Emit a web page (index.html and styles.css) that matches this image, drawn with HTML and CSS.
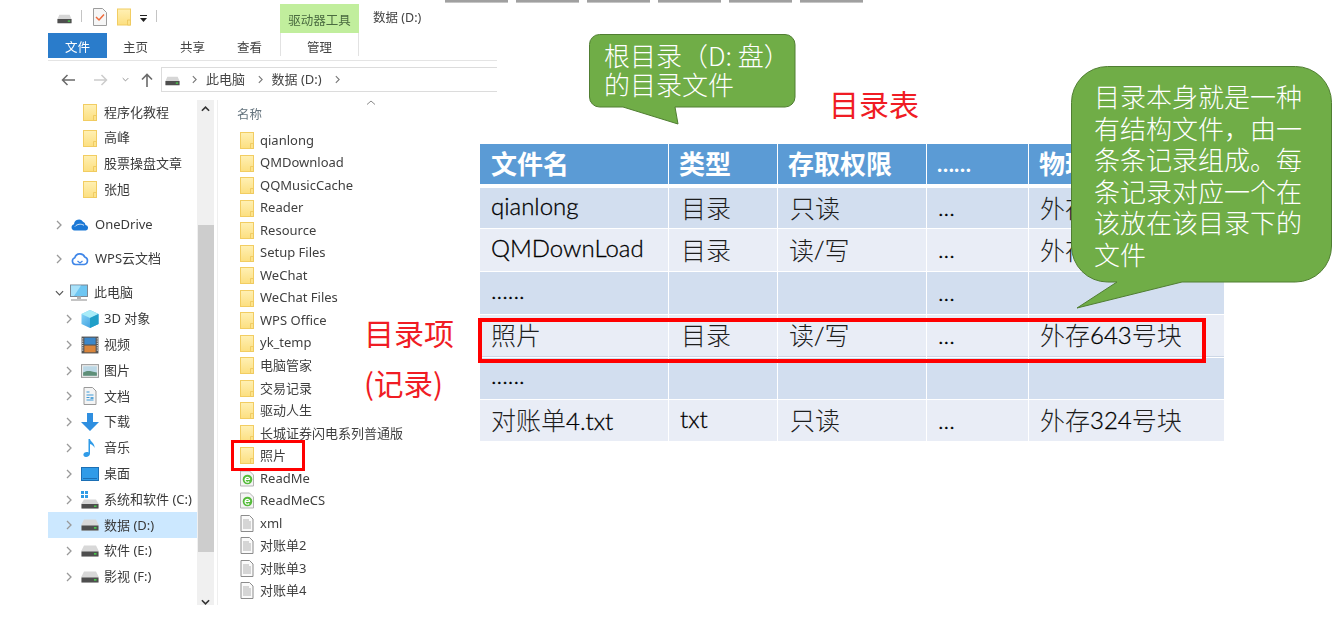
FILE: index.html
```html
<!DOCTYPE html>
<html lang="zh-CN">
<head>
<meta charset="utf-8">
<title>目录表</title>
<link rel="stylesheet" href="styles.css">
</head>
<body>
<svg class="defs" width="0" height="0" aria-hidden="true">
  <defs>
    <linearGradient id="fg" x1="0" y1="0" x2="0" y2="1"><stop offset="0" stop-color="#fff0b4"/><stop offset="1" stop-color="#fcdf80"/></linearGradient>
    <linearGradient id="sc" x1="0" y1="0" x2="1" y2="1"><stop offset="0" stop-color="#8fdcfb"/><stop offset="1" stop-color="#2a8fd8"/></linearGradient>
    <symbol id="folder" viewBox="0 0 14 17"><rect x=".5" y=".5" width="13" height="16" fill="url(#fg)" stroke="#f2cd62"/><path d="M10.500 16.500V11.500h3V16.500z" fill="#fde38a" stroke="#ecc65a" stroke-width=".8"/></symbol>
    <symbol id="drive" viewBox="0 0 16 10"><path d="M2.500.5h11L15.500 5v4.500H.5V5z" fill="#d6d6d6"/><rect x=".5" y="5" width="15" height="4.500" fill="#4e4e4e"/><rect x="11.500" y="6.500" width="2.500" height="1.500" fill="#47c84a"/></symbol>
    <symbol id="cdrive" viewBox="0 0 18 18"><g fill="#2e9be6"><rect x="0" y="0" width="3" height="3"/><rect x="4" y="0" width="3" height="3"/><rect x="0" y="4" width="3" height="3"/><rect x="4" y="4" width="3" height="3"/></g><path d="M3 8.500h12l2.500 4v5H.5v-5z" fill="#d6d6d6"/><rect x=".5" y="13" width="17" height="4.500" fill="#4e4e4e"/><rect x="13" y="14.500" width="2.500" height="1.500" fill="#47c84a"/></symbol>
    <symbol id="ddrive" viewBox="0 0 18 12"><path d="M3 .5h12l2.500 5v6H.5v-6z" fill="#d8d8d8"/><rect x=".5" y="6.500" width="17" height="5" fill="#4e4e4e"/><rect x="13" y="8" width="2.500" height="1.700" fill="#47c84a"/></symbol>
    <symbol id="onedrive" viewBox="0 0 18 12"><path d="M3.500 11.500a3.200 3.200 0 0 1-.5-6.300 5 5 0 0 1 9-2.500 3.800 3.800 0 0 1 2.500 3.300 2.800 2.800 0 0 1 .5 5.500z" fill="#1b78d6"/><path d="M4 7.500c2-2.500 6-3 9-1.200" fill="none" stroke="#fff" stroke-width=".8"/></symbol>
    <symbol id="wps" viewBox="0 0 18 14"><path d="M4.500 12.500a3.500 3.500 0 0 1-.7-6.800 5.300 5.300 0 0 1 10-.6 3.800 3.800 0 0 1-.6 7.400z" fill="#fff" stroke="#3f86e8" stroke-width="1.600"/><path d="M6.500 9l2.500 2 2.500-2" fill="none" stroke="#3f86e8" stroke-width="1.300"/></symbol>
    <symbol id="pc" viewBox="0 0 18 17"><rect x=".5" y=".5" width="17" height="11.500" fill="#6ec6f2" stroke="#7c8894"/><path d="M1 1h10L4 11.500H1z" fill="#a9e2fa"/><rect x="7" y="12" width="4" height="2.500" fill="#b4b4b4"/><rect x="1" y="14.500" width="16" height="2" fill="#c4c4c4"/></symbol>
    <symbol id="cube" viewBox="0 0 18 18"><path d="M9 0l8.500 4v10L9 18 .5 14V4z" fill="url(#sc)"/><path d="M9 0l8.500 4L9 8 .5 4z" fill="#a8ecf8"/><path d="M9 8v10l8.500-4V4z" fill="#1f9fc8"/></symbol>
    <symbol id="film" viewBox="0 0 16 16"><rect x=".5" y=".5" width="15" height="15" fill="#555"/><rect x="3" y="1.500" width="10" height="6" fill="#3b87c9"/><rect x="3" y="8.500" width="10" height="6" fill="#d9853c"/><path d="M1.500 2v12M14.500 2v12" stroke="#ddd" stroke-dasharray="1 1"/></symbol>
    <symbol id="pic" viewBox="0 0 17 13"><rect x=".5" y=".5" width="16" height="12" fill="#f2f2f2" stroke="#9a9a9a"/><rect x="2" y="2" width="13" height="9" fill="#bcd8e6"/><path d="M2 8c3-2 6-2 13 0v3H2z" fill="#5f8f78"/></symbol>
    <symbol id="docblue" viewBox="0 0 13 18"><path d="M.5.5h8.500l3.500 3.500v13.500H.5z" fill="#f4f4f4" stroke="#9a9a9a"/><path d="M3 5h3M3 8h7M3 10.500h3M3 13h7" stroke="#3f9ad8" stroke-width="1.100"/><rect x="7" y="10" width="3" height="2" fill="#5aa6d8"/></symbol>
    <symbol id="down" viewBox="0 0 18 18"><path d="M6 0h6v9h6l-9 9-9-9h6z" fill="#2f8fe0"/></symbol>
    <symbol id="note" viewBox="0 0 14 18"><path d="M5.500 0h1.500c.5 3 5 4 4.500 9-.7-2-2.500-3.500-4.500-4v9.500c0 2-2 3.500-4 3.500S0 16.500.5 15s3-2.500 5-1.500z" fill="#2f9be8"/></symbol>
    <symbol id="desk" viewBox="0 0 18 14"><rect x=".5" y=".5" width="17" height="13" fill="#2f9be8" stroke="#1c6fb4"/><rect x="2" y="11" width="14" height="1" fill="#1c6fb4"/></symbol>
    <symbol id="check" viewBox="0 0 14 18"><path d="M.5.500h9l4 4v13H.5z" fill="#f6f6f6" stroke="#9c9c9c"/><path d="M3 9l3 3 5-5.500" fill="none" stroke="#ee6a3c" stroke-width="1.500"/></symbol>
    <symbol id="ie" viewBox="0 0 14 16"><path d="M.5.500h9l4 4v11H.5z" fill="#f4f4f4" stroke="#b4b4b4"/><circle cx="7.500" cy="9" r="4.800" fill="#55bb3a"/><path d="M5 9h5M9.800 8.800a2.400 2.400 0 1 0-.6 2.200" fill="none" stroke="#fff" stroke-width="1.200"/></symbol>
    <symbol id="txt" viewBox="0 0 13 17"><path d="M.5.500h8.500l3.500 3.500v12.500H.5z" fill="#fafafa" stroke="#8c8c8c"/><path d="M2.500 5h6M2.500 7h8M2.500 9h8M2.500 11h8M2.500 13h8" stroke="#a8a8a8" stroke-width=".9"/></symbol>
    <symbol id="chev" viewBox="0 0 6 10"><path d="M1 1l4 4-4 4" fill="none" stroke="currentColor" stroke-width="1.300"/></symbol>
    <symbol id="chevd" viewBox="0 0 10 6"><path d="M1 1l4 4 4-4" fill="none" stroke="currentColor" stroke-width="1.300"/></symbol>
  </defs>
</svg>

<div class="slide">
  <div class="topstrips"><i></i><i></i><i></i><i></i><i></i><i></i></div>

  <section class="explorer">
    <header class="titlebar">
      <svg class="ti-drive"><use href="#drive"/></svg>
      <span class="ti-sep"></span>
      <svg class="ti-check"><use href="#check"/></svg>
      <svg class="ti-folder"><use href="#folder"/></svg>
      <svg class="ti-drop" viewBox="0 0 7 8"><path d="M0 0h7v1H0zM0 3h7L3.500 7z" fill="#222"/></svg>
      <span class="ti-sep ti-sep2"></span>
      <span class="ctx-tab">驱动器工具</span>
      <span class="win-title">数据 (D:)</span>
    </header>
    <nav class="tabs">
      <span class="tab file">文件</span>
      <span class="tab">主页</span>
      <span class="tab">共享</span>
      <span class="tab">查看</span>
      <span class="tab manage">管理</span>
    </nav>
    <div class="addr-row">
      <svg class="nav back" viewBox="0 0 14 12"><path d="M14 6H1.500M6.500 1l-5 5 5 5" fill="none" stroke="currentColor" stroke-width="1.500"/></svg>
      <svg class="nav fwd" viewBox="0 0 14 12"><path d="M0 6h12.500M7.500 1l5 5-5 5" fill="none" stroke="currentColor" stroke-width="1.500"/></svg>
      <svg class="nav drop"><use href="#chevd"/></svg>
      <svg class="nav up" viewBox="0 0 12 14"><path d="M6 14V1.500M1 6.500l5-5 5 5" fill="none" stroke="currentColor" stroke-width="1.600"/></svg>
      <div class="addr">
        <svg class="addr-drive"><use href="#drive"/></svg>
        <svg class="addr-chev"><use href="#chev"/></svg>
        <span>此电脑</span>
        <svg class="addr-chev"><use href="#chev"/></svg>
        <span>数据 (D:)</span>
        <svg class="addr-chev"><use href="#chev"/></svg>
      </div>
    </div>

    <div class="main">
      <aside class="tree">
        <div class="node l3"><svg class="fd"><use href="#folder"/></svg>程序化教程</div>
        <div class="node l3"><svg class="fd"><use href="#folder"/></svg>高峰</div>
        <div class="node l3"><svg class="fd"><use href="#folder"/></svg>股票操盘文章</div>
        <div class="node l3"><svg class="fd"><use href="#folder"/></svg>张旭</div>
        <div class="node l1 gap9"><svg class="ch"><use href="#chev"/></svg><svg class="ic"><use href="#onedrive"/></svg>OneDrive</div>
        <div class="node l1 gap8"><svg class="ch"><use href="#chev"/></svg><svg class="ic"><use href="#wps"/></svg>WPS云文档</div>
        <div class="node l1 gap8"><svg class="ch open"><use href="#chevd"/></svg><svg class="ic"><use href="#pc"/></svg>此电脑</div>
        <div class="node l2"><svg class="ch"><use href="#chev"/></svg><svg class="ic"><use href="#cube"/></svg>3D 对象</div>
        <div class="node l2"><svg class="ch"><use href="#chev"/></svg><svg class="ic"><use href="#film"/></svg>视频</div>
        <div class="node l2"><svg class="ch"><use href="#chev"/></svg><svg class="ic"><use href="#pic"/></svg>图片</div>
        <div class="node l2"><svg class="ch"><use href="#chev"/></svg><svg class="ic"><use href="#docblue"/></svg>文档</div>
        <div class="node l2"><svg class="ch"><use href="#chev"/></svg><svg class="ic"><use href="#down"/></svg>下载</div>
        <div class="node l2"><svg class="ch"><use href="#chev"/></svg><svg class="ic"><use href="#note"/></svg>音乐</div>
        <div class="node l2"><svg class="ch"><use href="#chev"/></svg><svg class="ic"><use href="#desk"/></svg>桌面</div>
        <div class="node l2"><svg class="ch"><use href="#chev"/></svg><svg class="ic"><use href="#cdrive"/></svg>系统和软件 (C:)</div>
        <div class="node l2 sel"><svg class="ch"><use href="#chev"/></svg><svg class="ic"><use href="#ddrive"/></svg>数据 (D:)</div>
        <div class="node l2"><svg class="ch"><use href="#chev"/></svg><svg class="ic"><use href="#ddrive"/></svg>软件 (E:)</div>
        <div class="node l2"><svg class="ch"><use href="#chev"/></svg><svg class="ic"><use href="#ddrive"/></svg>影视 (F:)</div>
      </aside>
      <div class="vbar">
        <svg class="vb-arrow" viewBox="0 0 10 6"><path d="M1 5l4-4 4 4" fill="none" stroke="#333" stroke-width="1.800"/></svg>
        <div class="vb-thumb"></div>
        <svg class="vb-arrow" viewBox="0 0 10 6"><path d="M1 1l4 4 4-4" fill="none" stroke="#333" stroke-width="1.800"/></svg>
      </div>
      <div class="files">
        <div class="files-head"><span>名称</span><svg class="sort" viewBox="0 0 10 5"><path d="M1 4.500L5 1l4 3.500" fill="none" stroke="#8a8a8a"/></svg></div>
        <div class="f"><svg class="fi"><use href="#folder"/></svg>qianlong</div>
        <div class="f"><svg class="fi"><use href="#folder"/></svg>QMDownload</div>
        <div class="f"><svg class="fi"><use href="#folder"/></svg>QQMusicCache</div>
        <div class="f"><svg class="fi"><use href="#folder"/></svg>Reader</div>
        <div class="f"><svg class="fi"><use href="#folder"/></svg>Resource</div>
        <div class="f"><svg class="fi"><use href="#folder"/></svg>Setup Files</div>
        <div class="f"><svg class="fi"><use href="#folder"/></svg>WeChat</div>
        <div class="f"><svg class="fi"><use href="#folder"/></svg>WeChat Files</div>
        <div class="f"><svg class="fi"><use href="#folder"/></svg>WPS Office</div>
        <div class="f"><svg class="fi"><use href="#folder"/></svg>yk_temp</div>
        <div class="f"><svg class="fi"><use href="#folder"/></svg>电脑管家</div>
        <div class="f"><svg class="fi"><use href="#folder"/></svg>交易记录</div>
        <div class="f"><svg class="fi"><use href="#folder"/></svg>驱动人生</div>
        <div class="f"><svg class="fi"><use href="#folder"/></svg>长城证券闪电系列普通版</div>
        <div class="f"><svg class="fi"><use href="#folder"/></svg>照片</div>
        <div class="f"><svg class="fi"><use href="#ie"/></svg>ReadMe</div>
        <div class="f"><svg class="fi"><use href="#ie"/></svg>ReadMeCS</div>
        <div class="f"><svg class="fi"><use href="#txt"/></svg>xml</div>
        <div class="f"><svg class="fi"><use href="#txt"/></svg>对账单2</div>
        <div class="f"><svg class="fi"><use href="#txt"/></svg>对账单3</div>
        <div class="f"><svg class="fi"><use href="#txt"/></svg>对账单4</div>
      </div>
    </div>
  </section>

  <section class="dir-table">
    <div class="c h">文件名</div><div class="c h">类型</div><div class="c h">存取权限</div><div class="c h dots">……</div><div class="c h">物理</div>

    <div class="c d lat">qianlong</div><div class="c d z"><span class="cjk">目录</span></div><div class="c d z"><span class="cjk">只读</span></div><div class="c d">...</div><div class="c d"><span class="cjk">外存</span></div>

    <div class="c l lat">QMDownLoad</div><div class="c l z"><span class="cjk">目录</span></div><div class="c l"><span class="cjk">读</span>/<span class="cjk">写</span></div><div class="c l">...</div><div class="c l"><span class="cjk">外存</span></div>

    <div class="c d low">......</div><div class="c d"></div><div class="c d"></div><div class="c d">...</div><div class="c d"></div>

    <div class="c l ln"><span class="cjk">照片</span></div><div class="c l ln z"><span class="cjk">目录</span></div><div class="c l ln"><span class="cjk">读</span>/<span class="cjk">写</span></div><div class="c l ln">...</div><div class="c l ln"><span class="cjk">外存</span>643<span class="cjk">号块</span></div>

    <div class="c d low">......</div><div class="c d"></div><div class="c d"></div><div class="c d"></div><div class="c d"></div>

    <div class="c l"><span><span class="cjk">对账单</span>4.txt</span></div><div class="c l lat">txt</div><div class="c l z"><span class="cjk">只读</span></div><div class="c l">...</div><div class="c l"><span class="cjk">外存</span>324<span class="cjk">号块</span></div>
  </section>

  <div class="mark mark-file"></div>
  <div class="mark mark-row"></div>

  <div class="label lb-table">目录表</div>
  <div class="label lb-item">目录项</div>
  <div class="label lb-rec">(记录)</div>

  <div class="callout co-root">
    <svg class="co-shape" viewBox="0 0 207 91"><path d="M10.500.5H196a10 10 0 0 1 10 10V63a10 10 0 0 1-10 10H86l3 17-55-17H10.500a10 10 0 0 1-10-10V10.500a10 10 0 0 1 10-10z"/></svg>
    <p>根目录（D: 盘）<br>的目录文件</p>
  </div>
  <div class="callout co-dir">
    <svg class="co-shape" viewBox="0 0 261 243"><path d="M36.500.5H224.500a36 36 0 0 1 36 36V180a36 36 0 0 1-36 36H111L6 242l40-26H36.500a36 36 0 0 1-36-36V36.500a36 36 0 0 1 36-36z"/></svg>
    <p>目录本身就是一种<br>有结构文件，由一<br>条条记录组成。每<br>条记录对应一个在<br>该放在该目录下的<br>文件</p>
  </div>
</div>
</body>
</html>
```

FILE: styles.css
```css
* { box-sizing: border-box; }
html, body { margin: 0; padding: 0; background: #fff; }
.defs { position: absolute; }
svg { display: block; flex: none; }

.slide {
  position: relative;
  width: 1332px;
  height: 638px;
  overflow: hidden;
  display: flex;
  align-items: flex-start;
  background: #fff;
  text-spacing-trim: space-all;
}

/* strips of the slide thumbnails at the very top */
.topstrips {
  position: absolute;
  left: 445px;
  top: 0;
  display: flex;
  gap: 8px;
}
.topstrips i {
  display: block;
  width: 63px;
  height: 3px;
  background: linear-gradient(#a0a0a0 55%, #dcdcdc);
}

/* ---------- explorer ---------- */
.explorer {
  flex: none;
  width: 449px;
  margin-left: 48px;
  font: 13px/1.2 "Noto Sans", "Noto Sans CJK SC", sans-serif;
  color: #3a3a3a;
  filter: blur(.35px);
}
.titlebar {
  display: flex;
  align-items: center;
  height: 33px;
  padding: 4px 0 0 9px;
  position: relative;
}
.ti-drive { width: 15px; height: 10px; margin-top: 1px; }
.ti-sep { width: 1px; height: 12px; background: #c4c4c4; margin: -5px 0 0 9px; }
.ti-check { width: 14px; height: 18px; margin: -3px 0 0 11px; }
.ti-folder { width: 14px; height: 18px; margin: -3px 0 0 10px; }
.ti-drop { width: 7px; height: 8px; margin: 0 0 0 9px; }
.ti-sep2 { margin-left: 9px; }
.ctx-tab {
  width: 79px;
  height: 29px;
  margin-left: 123px;
  background: #c1ee9d;
  color: #4a6b40;
  font-size: 12.5px;
  display: flex;
  align-items: center;
  justify-content: center;
  padding-top: 4px;
}
.win-title { margin: -3px 0 0 14px; font-size: 12.5px; color: #444; }

.tabs {
  display: flex;
  height: 28px;
  border-bottom: 1px solid #e4e4e4;
  align-items: flex-start;
}
.tab {
  width: 57px;
  height: 25px;
  display: flex;
  align-items: center;
  justify-content: center;
  color: #444;
  font-size: 12.5px;
  padding-top: 3px;
}
.tab.file { width: 59px; background: #2a7ccb; color: #fff; }
.tab.manage { width: 79px; margin-left: 2px; height: 23px; border-left: 1px solid #e2e2e2; border-right: 1px solid #e2e2e2; padding-top: 5px; }

.addr-row { display: flex; align-items: center; margin-top: 6px; height: 25px; padding-left: 13px; }
.nav { color: #6a6a6a; }
.back { width: 14px; height: 12px; }
.fwd { width: 14px; height: 12px; margin-left: 19px; color: #ccc; }
.drop { width: 7px; height: 5px; margin-left: 14px; color: #888; }
.up { width: 12px; height: 14px; margin-left: 12px; }
.addr {
  flex: 1;
  height: 25px;
  margin-left: 8px;
  border: 1px solid #dcdcdc;
  border-right: 0;
  display: flex;
  align-items: center;
  padding-left: 3px;
  font-size: 13px;
  color: #444;
}
.addr-drive { width: 15px; height: 10px; margin-top: 3px; }
.addr-chev { width: 5px; height: 9px; margin: 0 8.500px 0 13px; color: #777; }
.addr-drive + .addr-chev { margin: 0 9px 0 12px; }

.main { display: flex; margin-top: 8px; height: 505px; }

.tree { width: 149px; margin-top: -.5px; white-space: nowrap; }
.node { display: flex; align-items: center; height: 25.800px; font-size: 13px; color: #3a3a3a; }
.gap9 { margin-top: 9px; }
.gap8 { margin-top: 8.500px; }
.fd { width: 14px; height: 17px; margin-right: 7px; }
.l3 { padding-left: 35px; }
.l1 { padding-left: 8px; }
.l2 { padding-left: 18px; }
.ch { width: 6px; height: 10px; color: #999; }
.ch.open { width: 9px; height: 6px; color: #555; margin-right: -3px; margin-left: -1px; }
.ic { width: 18px; height: 18px; margin: 0 5px 0 9px; }
.l1 .ic { margin-right: 6px; }
.sel { background: #cce8ff; }

.vbar {
  width: 17px;
  background: #f0f0f0;
  display: flex;
  flex-direction: column;
  align-items: center;
}
.vb-arrow { width: 9px; height: 6px; }
.vb-arrow:first-child { margin-top: 6px; }
.vb-thumb { width: 16px; height: 327px; margin-top: 113px; background: #cdcdcd; }
.vbar .vb-thumb + .vb-arrow { margin-top: 47px; }

.files { flex: 1; margin-left: 3px; border-left: 1px solid #efefef; padding-left: 22px; white-space: nowrap; }
.files-head { display: flex; height: 29.400px; align-items: flex-start; font-size: 12.5px; color: #66757f; margin-left: -3px; padding-top: 7px; }
.sort { width: 10px; height: 5px; margin: -7px 0 0 104px; }
.f { display: flex; align-items: center; height: 22.530px; font-size: 13px; color: #3f3f3f; }
.fi { width: 14px; height: 17px; margin-right: 6px; }

/* ---------- directory table ---------- */
.dir-table {
  flex: none;
  margin: 144px 0 0 -17px;
  position: relative;
  width: 744px;
  display: grid;
  grid-template-columns: 188px 108px 148px 101px 195px;
  grid-template-rows: 43px 40px 42px 42px 42px 41px 41px;
  column-gap: 1px;
  row-gap: 1px;
  font: 300 24px/1 Lato, "Noto Sans CJK SC", sans-serif;
  color: #000;
  -webkit-text-stroke: .3px #000;
}
.c { display: flex; align-items: center; padding: 0 0 2px 11px; white-space: nowrap; }
.lat { padding-bottom: 4px; }
.h { background: #5b9bd5; color: #fff; font-weight: 700; font-size: 26px; padding: 0 0 0 10px; height: 40px; -webkit-text-stroke: 0; }
.h:first-child { padding-left: 11px; }
.d { background: #d2deef; }
.l { background: #e9edf6; }
.ln { border-bottom: 1px solid #cdd7e6; }
.z { padding-left: 12px; }
.low { align-items: flex-end; padding-bottom: 12px; }
.dots { font-size: 22px; }
.cjk { font-family: "Noto Sans CJK SC", sans-serif; font-weight: 300; font-size: 25px; color: #1e1e1e; -webkit-text-stroke: 0; }

/* ---------- overlays ---------- */
.mark { position: absolute; border-style: solid; border-color: #f00; }
.mark-file { left: 231px; top: 440px; width: 74px; height: 31px; border-width: 3px; }
.mark-row { left: 478px; top: 318px; width: 728px; height: 45px; border-width: 4px; }

.label { position: absolute; color: #f01c24; font-family: "Noto Sans CJK SC", sans-serif; line-height: 1; white-space: nowrap; }
.lb-table { left: 829px; top: 88px; font-size: 30px; }
.lb-item { left: 364px; top: 317px; font-size: 30px; }
.lb-rec { left: 364px; top: 368px; font-size: 29.500px; }

.callout { position: absolute; color: #fff; font-family: "Noto Sans CJK SC", sans-serif; font-weight: 300; font-size: 26px; }
.callout p { position: relative; margin: 0; white-space: nowrap; }
.co-shape { position: absolute; inset: 0; width: 100%; height: 100%; }
.co-shape path { fill: #70ad47; stroke: #507e32; stroke-width: 1; }
.co-root { left: 589px; top: 34px; width: 207px; height: 91px; }
.co-root p { padding: 6px 0 0 15px; line-height: 29px; }
.co-dir { left: 1071px; top: 66px; width: 261px; height: 243px; }
.co-dir p { padding: 14px 0 0 23px; line-height: 31.600px; }
```
